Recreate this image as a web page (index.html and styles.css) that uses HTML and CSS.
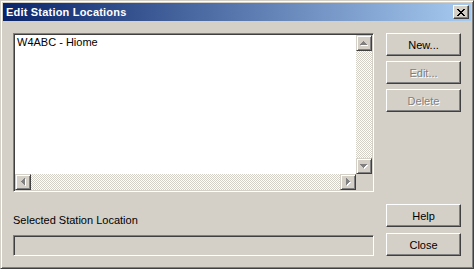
FILE: index.html
```html
<!DOCTYPE html>
<html lang="en">
<head>
    <meta charset="UTF-8">
    <title>Edit Station Locations</title>
    <link rel="stylesheet" href="styles.css">
</head>
<body>

<div class="window">
    <div class="titlebar">
        <span class="title">Edit Station Locations</span>
        <button class="title-close" aria-label="Close">
            <svg width="8" height="7" viewBox="0 0 8 7" shape-rendering="crispEdges">
                <path fill="#000" d="M0 0h2v1H0zM6 0h2v1H6zM1 1h2v1H1zM5 1h2v1H5zM2 2h4v1H2zM3 3h2v1H3zM2 4h4v1H2zM1 5h2v1H1zM5 5h2v1H5zM0 6h2v1H0zM6 6h2v1H6z"/>
            </svg>
        </button>
    </div>

    <div class="dialog-body">
        <div class="left-col">
            <div class="listbox sunken">
                <div class="list-items">
                    <div class="list-item">W4ABC - Hiome</div>
                </div>
                <div class="vscroll">
                    <div class="arrow-btn">
                        <svg width="8" height="5" viewBox="0 0 8 5" shape-rendering="crispEdges">
                            <path fill="#fff" transform="translate(1,1)" d="M3 0h1v1H3zM2 1h3v1H2zM1 2h5v1H1zM0 3h7v1H0z"/>
                            <path fill="#808080" d="M3 0h1v1H3zM2 1h3v1H2zM1 2h5v1H1zM0 3h7v1H0z"/>
                        </svg>
                    </div>
                    <div class="track"></div>
                    <div class="arrow-btn">
                        <svg width="8" height="5" viewBox="0 0 8 5" shape-rendering="crispEdges">
                            <path fill="#fff" transform="translate(1,1)" d="M0 0h7v1H0zM1 1h5v1H1zM2 2h3v1H2zM3 3h1v1H3z"/>
                            <path fill="#808080" d="M0 0h7v1H0zM1 1h5v1H1zM2 2h3v1H2zM3 3h1v1H3z"/>
                        </svg>
                    </div>
                </div>
                <div class="hscroll">
                    <div class="arrow-btn">
                        <svg width="5" height="8" viewBox="0 0 5 8" shape-rendering="crispEdges">
                            <path fill="#fff" transform="translate(1,1)" d="M0 3h1v1H0zM1 2h1v3H1zM2 1h1v5H2zM3 0h1v7H3z"/>
                            <path fill="#808080" d="M0 3h1v1H0zM1 2h1v3H1zM2 1h1v5H2zM3 0h1v7H3z"/>
                        </svg>
                    </div>
                    <div class="track"></div>
                    <div class="arrow-btn">
                        <svg width="5" height="8" viewBox="0 0 5 8" shape-rendering="crispEdges">
                            <path fill="#fff" transform="translate(1,1)" d="M0 0h1v7H0zM1 1h1v5H1zM2 2h1v3H2zM3 3h1v1H3z"/>
                            <path fill="#808080" d="M0 0h1v7H0zM1 1h1v5H1zM2 2h1v3H2zM3 3h1v1H3z"/>
                        </svg>
                    </div>
                </div>
                <div class="corner"></div>
            </div>

            <div class="field-label">Selected Station Location</div>
            <div class="field sunken"></div>
        </div>

        <div class="right-col">
            <div class="btn-group">
                <button class="btn">New...</button>
                <button class="btn" disabled>Edit...</button>
                <button class="btn" disabled>Delete</button>
            </div>
            <div class="btn-group bottom">
                <button class="btn">Help</button>
                <button class="btn">Close</button>
            </div>
        </div>
    </div>
</div>

</body>
</html>
```

FILE: styles.css
```css
body {
    margin: 0;
    padding: 0;
    font-family: "Liberation Sans", Arial, sans-serif;
    font-size: 11px;
    color: #000;
    background-color: #d4d0c8;
}
.window {
    width: 474px;
    height: 269px;
    box-sizing: border-box;
    display: flex;
    flex-direction: column;
    padding: 2px;
    background-color: #d4d0c8;
    border: 1px solid;
    border-color: #d4d0c8 #404040 #404040 #d4d0c8;
    box-shadow: inset 1px 1px #fff, inset -1px -1px #808080;
}
.titlebar {
    height: 18px;
    display: flex;
    align-items: center;
    justify-content: space-between;
    padding: 0 2px 0 3px;
    background: linear-gradient(to right, #0a246a, #a6caf0);
}
.title {
    color: white;
    font-weight: bold;
    font-size: 11px;
    line-height: 13px;
    letter-spacing: 0.2px;
}
.title-close {
    width: 16px;
    height: 14px;
    padding: 0;
    display: flex;
    align-items: center;
    justify-content: center;
    background-color: #d4d0c8;
    border: 1px solid;
    border-color: #fff #404040 #404040 #fff;
    box-shadow: inset -1px -1px #808080, inset 1px 1px #d4d0c8;
}
.dialog-body {
    flex: 1;
    display: grid;
    grid-template-columns: 361px 75px;
    column-gap: 12px;
    padding: 12px 10px 10px 10px;
}
/* sunken 3d edge, used by the list and the read-only field */
.sunken {
    box-sizing: border-box;
    border: 1px solid;
    border-color: #808080 #fff #fff #808080;
    box-shadow: inset 1px 1px #404040, inset -1px -1px #d4d0c8;
    padding: 1px;
}
.left-col {
    display: flex;
    flex-direction: column;
}
.listbox {
    height: 159px;
    display: grid;
    grid-template-columns: 1fr 16px;
    grid-template-rows: 1fr 16px;
    background-color: white;
}
.list-items {
    padding: 1px 2px;
}
.list-item {
    line-height: 13px;
}
.vscroll, .hscroll {
    display: flex;
}
.vscroll {
    flex-direction: column;
}
.track {
    flex: 1;
    background-color: #fff;
    background-image: conic-gradient(#d4d0c8 25%, #fff 0 50%, #d4d0c8 0 75%, #fff 0);
    background-size: 2px 2px;
}
.arrow-btn {
    width: 16px;
    height: 16px;
    box-sizing: border-box;
    display: flex;
    align-items: center;
    justify-content: center;
    background-color: #d4d0c8;
    border: 1px solid;
    border-color: #d4d0c8 #404040 #404040 #d4d0c8;
    box-shadow: inset 1px 1px #fff, inset -1px -1px #808080;
}
.corner {
    background-color: #d4d0c8;
}
.field-label {
    margin-top: 22px;
    line-height: 13px;
}
.field {
    margin-top: auto;
    height: 21px;
    background-color: #d4d0c8;
}
.right-col {
    display: flex;
    flex-direction: column;
    justify-content: space-between;
}
.btn-group {
    display: flex;
    flex-direction: column;
    gap: 5px;
}
.btn-group.bottom {
    gap: 6px;
}
.btn {
    width: 75px;
    height: 23px;
    padding: 0;
    font-family: "Liberation Sans", Arial, sans-serif;
    font-size: 11px;
    color: #000;
    background-color: #d4d0c8;
    border: 1px solid;
    border-color: #fff #404040 #404040 #fff;
    box-shadow: inset -1px -1px #808080, inset 1px 1px #d4d0c8;
}
.btn:disabled {
    color: #808080;
    text-shadow: 1px 1px #fff;
}
```
